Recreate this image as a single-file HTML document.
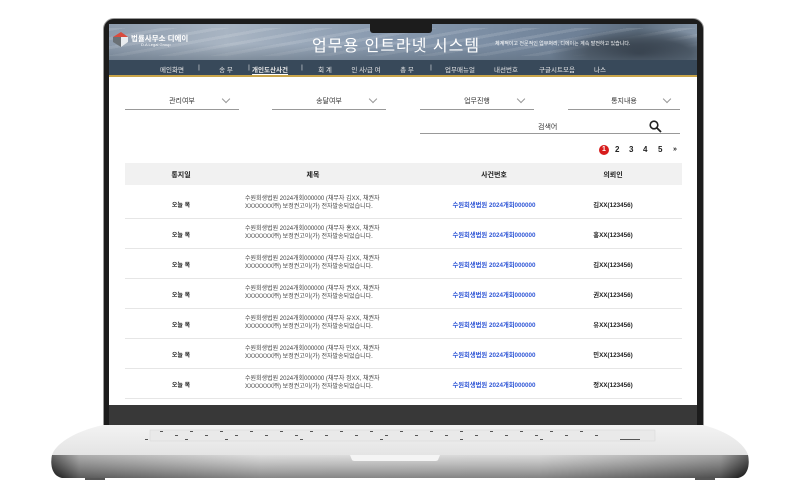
<!DOCTYPE html>
<html><head><meta charset="utf-8"><style>
*{margin:0;padding:0;box-sizing:border-box}
body{width:795px;height:500px;background:#fff;position:relative;overflow:hidden;font-family:"Liberation Sans","Noto Sans CJK KR",sans-serif}
.abs{position:absolute}
#bezel{left:103px;top:18px;width:601px;height:412px;background:#1c1c1c;border-radius:11px 11px 0 0;border:1px solid #9a9a9a}
#screen{left:109px;top:24px;width:588px;height:381px;background:#fff;overflow:hidden}
#lowbez{left:109px;top:405px;width:588px;height:20px;background:#383838}
#banner{left:0;top:0;width:588px;height:36px;background:linear-gradient(90deg,#8e9cad 0%,#a9b5c3 20%,#8a9bb0 45%,#7b8da3 65%,#6e8096 80%,#5d6d7e 90%,#8595a7 100%)}
#nav{left:0;top:36px;width:588px;height:17px;background:#38495a;border-bottom:2px solid #c9a54a}
.nv{position:absolute;top:40px;font-size:6.5px;color:#e8e8e8;transform:translateX(-50%);white-space:nowrap}
.dd{position:absolute;top:93px;height:17px;border-bottom:1px solid #999;font-size:7px;color:#333}
.dd span{position:absolute;left:0;right:0;text-align:center;top:3px}
.dd i{position:absolute;right:10px;top:3px;width:6px;height:6px;border-right:1px solid #999;border-bottom:1px solid #999;transform:rotate(45deg)}
.pg{position:absolute;top:145px;font-size:8px;color:#222;font-weight:bold}
.hd{position:absolute;top:163px;left:125px;width:557px;height:22px;background:#f1f1f1}
.th{position:absolute;top:170px;font-size:7px;font-weight:bold;color:#222;transform:translateX(-50%)}
.row{position:absolute;left:125px;width:557px;height:30px;border-bottom:1px solid #e6e6e6}
.c1{position:absolute;left:56px;top:11px;font-size:6px;color:#222;transform:translateX(-50%);font-weight:bold}
.c2{position:absolute;left:120px;top:6px;font-size:6px;color:#444;line-height:8px}
.c3{position:absolute;left:369px;top:11px;font-size:6.3px;color:#3057d6;transform:translateX(-50%);font-weight:bold}
.c4{position:absolute;left:488px;top:11px;font-size:6.3px;color:#222;transform:translateX(-50%);font-weight:bold}
</style></head><body>
<div class="abs" id="bezel"></div>
<div class="abs" id="lowbez"></div>
<svg class="abs" style="left:0;top:0" width="795" height="500">
<defs>
<linearGradient id="deck" x1="0" y1="0" x2="0" y2="1"><stop offset="0" stop-color="#f3f3f3"/><stop offset="1" stop-color="#e4e4e4"/></linearGradient>
<linearGradient id="front" x1="0" y1="0" x2="1" y2="0"><stop offset="0" stop-color="#1e1e1e"/><stop offset=".04" stop-color="#8a8a8a"/><stop offset=".3" stop-color="#cfcfcf"/><stop offset=".7" stop-color="#c9c9c9"/><stop offset=".96" stop-color="#777"/><stop offset="1" stop-color="#151515"/></linearGradient>
<linearGradient id="fv" x1="0" y1="0" x2="0" y2="1"><stop offset="0" stop-color="#fff" stop-opacity=".3"/><stop offset="1" stop-color="#000" stop-opacity=".35"/></linearGradient>
</defs>
<path d="M103 425 L703 425 C730 432 745 445 748 455 L52 455 C55 445 72 432 103 425Z" fill="url(#deck)"/>
<rect x="150" y="430" width="505" height="11" fill="#e9e9e9" stroke="#d6d6d6" stroke-width=".5"/>
<g fill="#555">
<rect x="160" y="431" width="3" height="1"/><rect x="190" y="431" width="3" height="1"/><rect x="220" y="431" width="3" height="1"/><rect x="250" y="431" width="3" height="1"/><rect x="280" y="431" width="3" height="1"/><rect x="310" y="431" width="3" height="1"/><rect x="340" y="431" width="3" height="1"/><rect x="370" y="431" width="3" height="1"/><rect x="400" y="431" width="3" height="1"/><rect x="430" y="431" width="3" height="1"/><rect x="460" y="431" width="3" height="1"/><rect x="490" y="431" width="3" height="1"/><rect x="520" y="431" width="3" height="1"/><rect x="550" y="431" width="3" height="1"/><rect x="580" y="431" width="3" height="1"/>
<rect x="175" y="435" width="3" height="1"/><rect x="205" y="435" width="3" height="1"/><rect x="235" y="435" width="3" height="1"/><rect x="265" y="435" width="3" height="1"/><rect x="295" y="435" width="3" height="1"/><rect x="325" y="435" width="3" height="1"/><rect x="355" y="435" width="3" height="1"/><rect x="385" y="435" width="3" height="1"/><rect x="415" y="435" width="3" height="1"/><rect x="445" y="435" width="3" height="1"/><rect x="475" y="435" width="3" height="1"/><rect x="505" y="435" width="3" height="1"/><rect x="535" y="435" width="3" height="1"/><rect x="565" y="435" width="3" height="1"/><rect x="595" y="435" width="3" height="1"/>
<rect x="145" y="439" width="3" height="1"/><rect x="185" y="439" width="3" height="1"/><rect x="225" y="439" width="3" height="1"/><rect x="300" y="439" width="3" height="1"/><rect x="380" y="439" width="3" height="1"/><rect x="460" y="439" width="3" height="1"/><rect x="540" y="439" width="3" height="1"/><rect x="620" y="439" width="20" height="1"/>
</g>
<path d="M52 455 L748 455 C750 465 748 476 738 478 L62 478 C52 476 50 465 52 455Z" fill="url(#front)"/>
<path d="M52 455 L748 455 C750 465 748 476 738 478 L62 478 C52 476 50 465 52 455Z" fill="url(#fv)"/>
<path d="M350 455 L440 455 L438 460 C437 461 436 461 434 461 L356 461 C354 461 353 461 352 460Z" fill="#f4f4f4"/>
<rect x="85" y="478" width="20" height="2" fill="#555"/><rect x="695" y="478" width="20" height="2" fill="#555"/>
</svg>
<div class="abs" id="screen">
 <div class="abs" id="banner"></div>
 <div class="abs" style="left:0;top:4px;width:588px;height:28px;background:repeating-linear-gradient(170deg,rgba(255,255,255,.12) 0 3px,transparent 3px 9px)"></div>
 <div class="abs" style="left:440px;top:4px;width:150px;height:32px;background:radial-gradient(ellipse at 60% 80%,#2c3540 0%,#46525f 40%,transparent 70%)"></div>
 <div class="abs" style="left:0;top:20px;width:588px;height:16px;background:linear-gradient(0deg,rgba(90,105,120,.5),transparent)"></div>
 <div class="abs" style="left:261px;top:0;width:62px;height:9px;background:#1c1c1c;border-radius:0 0 3px 3px"></div>
 <svg class="abs" style="left:4px;top:8px" width="16" height="16"><path d="M0 5 L8 0 L15 5 L8 5Z" fill="#d94b3e"/><path d="M0 5 L8 5 L8 15 L0 10Z" fill="#6a7075"/><path d="M8 5 L15 5 L15 10 L8 15Z" fill="#e9ecef"/></svg>
 <div class="abs" style="left:22px;top:9px;font-size:7.5px;color:#fff;font-weight:bold">법률사무소 디에이</div>
 <div class="abs" style="left:32px;top:18px;font-size:4px;color:#fff">D.A Legal Group</div>
 <div class="abs" style="left:203px;top:8px;font-size:16px;color:#fff;letter-spacing:1px">업무용 인트라넷 시스템</div>
 <div class="abs" style="left:386px;top:16px;font-size:5px;color:#fff">체계적이고 전문적인 업무처리, 디에이는 계속 발전하고 있습니다.</div>
 <div class="abs" id="nav"></div>
 <span class="nv" style="left:63px">메인화면</span><span class="nv" style="left:90px">|</span>
 <span class="nv" style="left:117px">송 무</span><span class="nv" style="left:140px">|</span>
 <span class="nv" style="left:161px;border-bottom:1px solid #fff;font-weight:bold">개인도산사건</span><span class="nv" style="left:193px">|</span>
 <span class="nv" style="left:216px">회 계</span>
 <span class="nv" style="left:257px">인 사/급 여</span>
 <span class="nv" style="left:298px">총 무</span><span class="nv" style="left:322px">|</span>
 <span class="nv" style="left:351px">업무매뉴얼</span>
 <span class="nv" style="left:397px">내선번호</span>
 <span class="nv" style="left:448px">구글시트모음</span>
 <span class="nv" style="left:491px">나스</span>
</div>
<div class="dd" style="left:125px;width:114px"><span>관리여부</span><i></i></div>
<div class="dd" style="left:272px;width:114px"><span>송달여부</span><i></i></div>
<div class="dd" style="left:420px;width:114px"><span>업무진행</span><i></i></div>
<div class="dd" style="left:568px;width:112px"><span>통지내용</span><i></i></div>
<div class="abs" style="left:420px;top:118px;width:260px;height:16px;border-bottom:1px solid #999"></div>
<div class="abs" style="left:538px;top:122px;font-size:7px;color:#333">검색어</div>
<svg class="abs" style="left:649px;top:120px" width="13" height="13"><circle cx="5" cy="5" r="3.8" fill="none" stroke="#222" stroke-width="1.6"/><path d="M8 8 L12 12" stroke="#222" stroke-width="1.8"/></svg>
<div class="abs" style="left:599px;top:145px;width:10px;height:10px;border-radius:50%;background:#d71c1c;color:#fff;font-size:7px;font-weight:bold;text-align:center;line-height:10px">1</div>
<span class="pg" style="left:615px">2</span><span class="pg" style="left:629px">3</span><span class="pg" style="left:643px">4</span><span class="pg" style="left:658px">5</span><span class="pg" style="left:673px;font-size:7px;top:146px">»</span>
<div class="hd"></div>
<span class="th" style="left:181px">통지일</span><span class="th" style="left:313px">제목</span><span class="th" style="left:494px">사건번호</span><span class="th" style="left:613px">의뢰인</span>
<div class="row" style="top:189px"><span class="c1">오늘 목</span><div class="c2">수원회생법원 2024개회000000 (채무자 김XX, 채권자<br>XXXXXXX㈜) 보정권고이(가) 전자발송되었습니다.</div><span class="c3">수원회생법원 2024개회000000</span><span class="c4">김XX(123456)</span></div>
<div class="row" style="top:219px"><span class="c1">오늘 목</span><div class="c2">수원회생법원 2024개회000000 (채무자 홍XX, 채권자<br>XXXXXXX㈜) 보정권고이(가) 전자발송되었습니다.</div><span class="c3">수원회생법원 2024개회000000</span><span class="c4">홍XX(123456)</span></div>
<div class="row" style="top:249px"><span class="c1">오늘 목</span><div class="c2">수원회생법원 2024개회000000 (채무자 김XX, 채권자<br>XXXXXXX㈜) 보정권고이(가) 전자발송되었습니다.</div><span class="c3">수원회생법원 2024개회000000</span><span class="c4">김XX(123456)</span></div>
<div class="row" style="top:279px"><span class="c1">오늘 목</span><div class="c2">수원회생법원 2024개회000000 (채무자 권XX, 채권자<br>XXXXXXX㈜) 보정권고이(가) 전자발송되었습니다.</div><span class="c3">수원회생법원 2024개회000000</span><span class="c4">권XX(123456)</span></div>
<div class="row" style="top:309px"><span class="c1">오늘 목</span><div class="c2">수원회생법원 2024개회000000 (채무자 유XX, 채권자<br>XXXXXXX㈜) 보정권고이(가) 전자발송되었습니다.</div><span class="c3">수원회생법원 2024개회000000</span><span class="c4">유XX(123456)</span></div>
<div class="row" style="top:339px"><span class="c1">오늘 목</span><div class="c2">수원회생법원 2024개회000000 (채무자 민XX, 채권자<br>XXXXXXX㈜) 보정권고이(가) 전자발송되었습니다.</div><span class="c3">수원회생법원 2024개회000000</span><span class="c4">민XX(123456)</span></div>
<div class="row" style="top:369px"><span class="c1">오늘 목</span><div class="c2">수원회생법원 2024개회000000 (채무자 정XX, 채권자<br>XXXXXXX㈜) 보정권고이(가) 전자발송되었습니다.</div><span class="c3">수원회생법원 2024개회000000</span><span class="c4">정XX(123456)</span></div>
</body></html>
